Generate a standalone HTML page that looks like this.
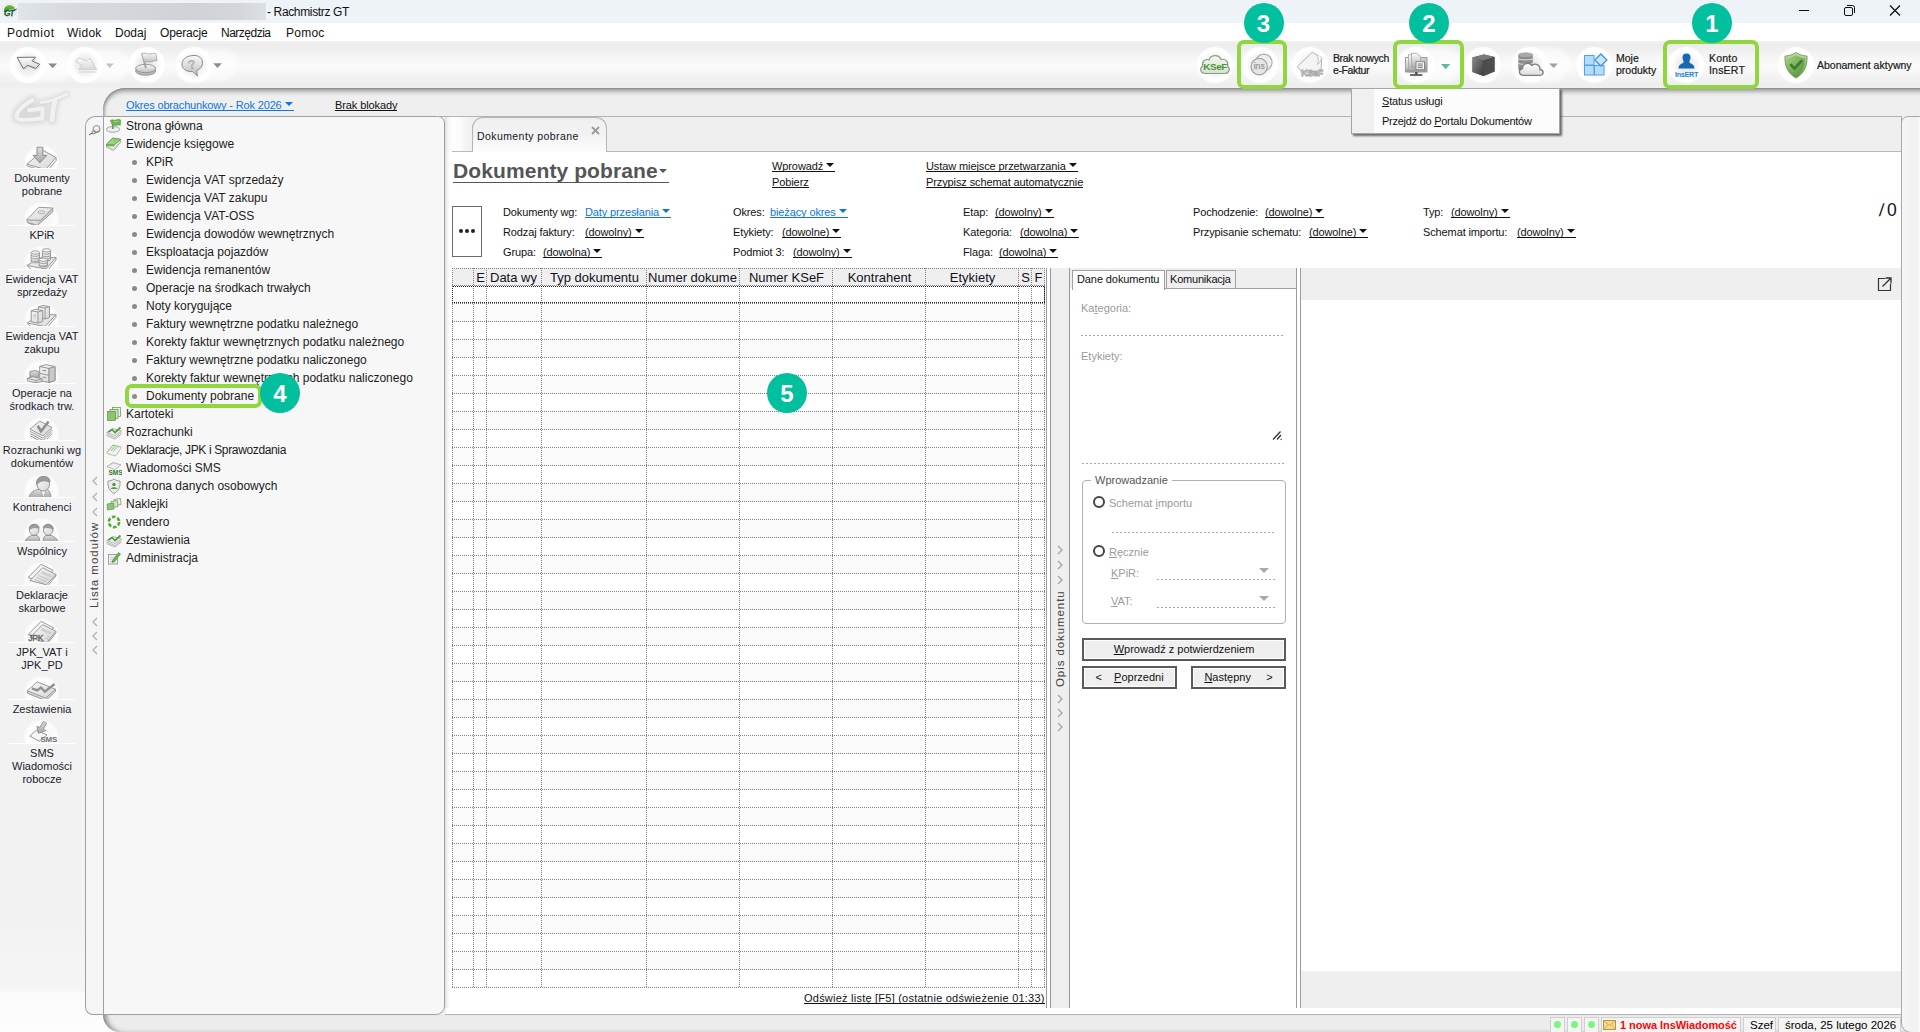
<!DOCTYPE html>
<html lang="pl">
<head>
<meta charset="utf-8">
<title>Rachmistrz GT</title>
<style>
*{box-sizing:border-box;margin:0;padding:0}
html,body{width:1920px;height:1032px;overflow:hidden;background:#f2f2f2}
body{font-family:"Liberation Sans",sans-serif;font-size:11px;color:#000;position:relative}
.abs{position:absolute}
.t{position:absolute;white-space:nowrap;line-height:1}
u{text-decoration:underline}
/* title */
#title{left:0;top:0;width:1920px;height:23px;background:#eef3f8}
#menu{left:0;top:23px;width:1920px;height:18px;background:#fff}
#menu span{position:absolute;top:3px;font-size:12px;line-height:14px;letter-spacing:.25px;color:#111}
#toolbar{left:0;top:41px;width:1920px;height:47px;background:linear-gradient(#f2f2f2 0%,#ececec 7%,#efefef 19%,#f6f6f6 36%,#fafafa 51%,#f7f7f7 64%,#f1f1f1 81%,#eeeeee 95%,#f0f0f0 100%)}
.glow{position:absolute;border-radius:50%;background:radial-gradient(closest-side,#e7e7e7 0%,#ebebeb 28%,#f3f3f3 50%,#fbfbfb 66%,#ffffff 76%,#ffffff 89%,rgba(255,255,255,0) 100%)}
.pill{position:absolute;border-radius:20px;background:rgba(255,255,255,.55);filter:blur(2px)}
.tbt{position:absolute;font-size:10.5px;line-height:12px;color:#1c1c1c;white-space:nowrap;-webkit-text-stroke:.22px #1c1c1c}
/* left bar */
#leftbar{left:0;top:88px;width:125px;height:944px;background:linear-gradient(#f2f2f2 0%,#f2f2f2 88%,#f5f5f5 95.600%,#fbfbfb 95.900%,#fdfdfd 100%)}
.mod{position:absolute;left:0;width:84px;text-align:center;font-size:11px;line-height:13px;color:#1a1a2a}
.mod .ic{position:relative;width:66px;height:24px;margin:0 auto 3px;border-bottom:1px solid #fff;overflow:hidden}
.mod .ic:before{content:"";position:absolute;left:15px;top:0;width:35px;height:35px;border-radius:50%;background:radial-gradient(closest-side,#f3f3f3 0%,#f9f9f9 55%,#fdfdfd 85%,#f6f6f6 100%)}
.mod .ic svg{position:absolute;left:0;top:0;width:66px;height:24px}
/* frame */
#frame{left:103px;top:88px;width:1830px;height:944px;border-radius:22px 0 0 20px;background:#efefef;box-shadow:inset 0 5px 5px -2px #8e8e8e, inset 0 1px 0 0 #a2a2a2, inset 3px 0 3px -1px #b0b0b0}
#lista{left:85px;top:116px;width:19px;height:899px;border:1px solid #a0a0a0;border-right:none;border-radius:10px 0 0 8px;background:#f5f5f5}
#tree{left:103px;top:116px;width:342px;height:899px;border:1px solid #a0a0a0;border-radius:0 7px 9px 0;background:#f7f7f7}
.tr{position:absolute;left:126px;font-size:12px;line-height:18px;height:18px;white-space:nowrap;color:#1c1c1c}
.tr.s{left:146px}
.tr.s:before{content:"";position:absolute;left:-14px;top:7px;width:5px;height:5px;border-radius:50%;background:#8a8a8a}
.tri{position:absolute;left:106px;width:16px;height:16px}
.vtxt{position:absolute;white-space:nowrap;font-size:12px;letter-spacing:.55px;color:#333;transform-origin:0 0;transform:rotate(-90deg);line-height:14px}
.chev{position:absolute;width:6px;height:10px}
/* content */
#content{left:445px;top:116px;width:1457px;height:892px;border:1px solid #b4b4b4;border-left:1px solid #f4f4f4;border-right:1px solid #aaa;border-bottom:none;border-radius:0;background:#efefef;overflow:hidden}
#white{left:445px;top:152px;width:1456px;height:856px;background:linear-gradient(90deg,#dcdcdc 0,#f1f1f1 2px,#fff 5px)}
.f{position:absolute;white-space:nowrap;font-size:11px;line-height:13px;color:#111}
.f u,.btn u{text-decoration:underline;text-underline-offset:.6px;text-decoration-thickness:1px}
.blue{color:#0b76e0}
.arr{position:absolute;right:1px;top:3px;width:0;height:0;border-left:4px solid transparent;border-right:4px solid transparent;border-top:4px solid currentColor}
.ua{position:relative;display:inline-block;height:13px;line-height:13px}
.ua.a{padding-right:12px}
.ua:after{content:"";position:absolute;left:0;right:0;top:11px;height:1px;background:currentColor}
.g{color:#9a9a9a}
.dsh{height:1px;background:repeating-linear-gradient(90deg,#a8a8a8 0,#a8a8a8 2px,transparent 2px,transparent 4px)}
.btn{position:absolute;border:2px solid #5a5a5a;background:#efefef;box-shadow:inset 0 0 0 1px #fff;font-size:11px;line-height:18px;text-align:center;color:#111}
.sc{position:absolute;top:1017px;height:16px;border:1px solid #cfcfcf;background:#f4f4f4;font-size:11.5px;line-height:14px;white-space:nowrap}
.badge{position:absolute;width:40px;height:40px;border-radius:50%;background:#02bf9d;color:#fff;font-weight:bold;font-size:24px;line-height:41px;text-align:center}
.gbox{position:absolute;border:4px solid #8fd63f;border-radius:7px}
</style>
</head>
<body>
<!-- TITLE BAR -->
<div id="title" class="abs">
<svg class="abs" style="left:0;top:0" width="20" height="22" viewBox="0 0 20 22"><defs><linearGradient id="gtg" x1="0" y1="0" x2="0" y2="1"><stop offset="0" stop-color="#6fcb42"/><stop offset="1" stop-color="#2f7f1d"/></linearGradient></defs><circle cx="9.400" cy="10.400" r="6.900" fill="#fdfdfd" stroke="#dcdcdc" stroke-width=".8"/><path d="M3.900 12 C3.600 7.600 6.400 5 9.600 5 C12 5 14 6.300 15 8.600 L9 9.800 L5.500 12.500 Z" fill="url(#gtg)"/><text x="3.900" y="15.900" font-family="Liberation Sans" font-weight="bold" font-style="italic" font-size="8.200" letter-spacing="-.7" fill="#1c5a38" stroke="#1c5a38" stroke-width=".3">GT</text><path d="M12 10.500 L16.800 9" stroke="#1c5a38" stroke-width=".9"/></svg>
<div class="abs" style="left:18px;top:3px;width:248px;height:17px;background:linear-gradient(90deg,#e1e4e9 0%,#dcdfe3 8%,#d6d8dc 25%,#d4d6da 45%,#d0d2d6 70%,#d4d6da 90%,#dde0e5 100%)"></div>
<div class="t" style="left:267px;top:6px;font-size:12px;color:#111;letter-spacing:-.36px">- Rachmistrz GT</div>
<svg class="abs" style="left:1790px;top:0" width="130" height="23" viewBox="0 0 130 23"><g stroke="#111" stroke-width="1" fill="none"><path d="M9 10.5 H19"/><rect x="54.5" y="7.5" width="8" height="8" rx="1.5"/><path d="M57 5.5 H62.5 A2 2 0 0 1 64.5 7.5 V13"/><path d="M100 5.5 L110 15.5 M110 5.5 L100 15.5" stroke-width="1.25"/></g></svg>
</div>
<!-- MENU -->
<div id="menu" class="abs">
<span style="left:7px;letter-spacing:.5px">Podmiot</span><span style="left:67px">Widok</span><span style="left:115px;letter-spacing:0">Dodaj</span><span style="left:160px;letter-spacing:-.15px">Operacje</span><span style="left:221px;letter-spacing:-.5px">Narzędzia</span><span style="left:286px">Pomoc</span>
</div>
<!-- TOOLBAR -->
<div id="toolbar" class="abs">
<!-- left buttons -->
<div class="pill" style="left:11px;top:8px;width:62px;height:32px"></div>
<div class="pill" style="left:68px;top:8px;width:62px;height:32px"></div>
<div class="pill" style="left:176px;top:8px;width:62px;height:32px"></div>
<div class="pill" style="left:1398px;top:7px;width:64px;height:34px"></div>
<div class="pill" style="left:1512px;top:7px;width:58px;height:34px"></div>
<div class="glow" style="left:9px;top:5px;width:38px;height:38px"></div>
<div class="glow" style="left:66px;top:5px;width:38px;height:38px"></div>
<div class="glow" style="left:128px;top:5px;width:38px;height:38px"></div>
<div class="glow" style="left:175px;top:5px;width:38px;height:38px"></div>
<svg class="abs" style="left:0;top:0" width="240" height="47" viewBox="0 0 240 47">
<defs><linearGradient id="gsil" x1="0" y1="0" x2="0" y2="1"><stop offset="0" stop-color="#fafafa"/><stop offset="1" stop-color="#bdbdbd"/></linearGradient>
<linearGradient id="gsil3" x1="0" y1="0" x2="0" y2="1"><stop offset="0" stop-color="#fbfbfb"/><stop offset="1" stop-color="#dadada"/></linearGradient>
<linearGradient id="gsil2" x1="0" y1="0" x2="0" y2="1"><stop offset="0" stop-color="#fbfbfb"/><stop offset="1" stop-color="#d9d9d9"/></linearGradient></defs>
<!-- back arrow -->
<path d="M17.200 16.400 L35.600 16.200 L31.900 19.900 L39.700 23.300 L35.600 27.400 L27.800 24.300 L23.400 27.700 Z" fill="#cfcfcf" opacity=".7" transform="translate(.5,1.800)"/>
<path d="M17.200 16.400 L35.600 16.200 L31.900 19.900 L39.700 23.300 L35.600 27.400 L27.800 24.300 L23.400 27.700 Z" fill="url(#gsil3)" stroke="#707070" stroke-width="1" stroke-linejoin="round"/>
<path d="M48.200 22.400 L57 22.400 L52.600 27.200 Z" fill="#8c8c8c"/>
<!-- forward arrow (disabled) -->
<path d="M75.300 20.200 L79 17 L86.200 19.900 L90.300 17.400 L96.600 28.300 L78.700 28.300 L82.500 24.600 Z" fill="url(#gsil2)" stroke="#cfcfcf" stroke-width="1" stroke-linejoin="round"/>
<path d="M78.700 31 H96.600" stroke="#dcdcdc" stroke-width="1.400"/>
<path d="M105.700 22.400 L113.700 22.400 L109.700 27 Z" fill="#c2c2c2"/>
<!-- flag -->
<ellipse cx="145.600" cy="30" rx="10" ry="4.200" fill="#b9b9b9" stroke="#8e8e8e" stroke-width=".9"/>
<ellipse cx="145.600" cy="27.500" rx="10" ry="4.200" fill="url(#gsil)" stroke="#8e8e8e" stroke-width=".9"/>
<path d="M141.300 12.800 L143.200 12.300 L146.800 26.800 L145 27.500 Z" fill="#a2a2a2"/>
<path d="M141.700 12.500 C145 11 147.500 14 151 12.800 C153 12 155 12.300 156 13 L157 20 C155 19 153 20.500 150 21 C147.500 21.300 145.500 20 143.800 21 Z" fill="url(#gsil)" stroke="#a4a4a4" stroke-width=".8"/>
<!-- help bubble -->
<path d="M193 14.5 C199 14 203 17.5 202.5 22.5 C202 26.5 199.5 28.5 196.5 29.5 L197.5 35 L192.5 30.5 C186 31 181.500 27.5 182 22.500 C182.5 17.5 187 15 193 14.5 Z" fill="url(#gsil)" stroke="#8c8c8c" stroke-width="1"/>
<text x="187.5" y="28" font-family="Liberation Sans" font-weight="bold" font-size="13" fill="#b9b9b9" stroke="#a8a8a8" stroke-width=".3" transform="rotate(-12 192 23)">?</text>
<path d="M213.200 22.300 L221.900 22.300 L217.550 27.100 Z" fill="#8c8c8c"/>
</svg>
<!-- right buttons -->
<div class="glow" style="left:1196px;top:5px;width:38px;height:38px"></div>
<div class="glow" style="left:1241px;top:5px;width:38px;height:38px"></div>
<div class="glow" style="left:1291px;top:5px;width:38px;height:38px"></div>
<div class="glow" style="left:1397px;top:5px;width:38px;height:38px"></div>
<div class="glow" style="left:1464px;top:5px;width:38px;height:38px"></div>
<div class="glow" style="left:1511px;top:5px;width:38px;height:38px"></div>
<div class="glow" style="left:1575px;top:5px;width:38px;height:38px"></div>
<div class="glow" style="left:1667px;top:5px;width:38px;height:38px"></div>
<div class="glow" style="left:1777px;top:5px;width:38px;height:38px"></div>
<svg class="abs" style="left:1190px;top:0" width="730" height="47" viewBox="1190 0 730 47">
<defs>
<linearGradient id="gk" x1="0" y1="0" x2="0" y2="1"><stop offset="0" stop-color="#f4f8f0"/><stop offset="1" stop-color="#d5e2cb"/></linearGradient>
<linearGradient id="gcube" x1="0" y1="0" x2="1" y2="1"><stop offset="0" stop-color="#8a8a8a"/><stop offset="1" stop-color="#3a3a3a"/></linearGradient>
<linearGradient id="gsh" x1="0" y1="0" x2="1" y2="1"><stop offset="0" stop-color="#a6d27e"/><stop offset="1" stop-color="#4f8f37"/></linearGradient>
<linearGradient id="gmon" x1="0" y1="0" x2="0" y2="1"><stop offset="0" stop-color="#fdfdfd"/><stop offset="1" stop-color="#a9a9a9"/></linearGradient>
<linearGradient id="gsh2" x1="0" y1="0" x2="0" y2="1"><stop offset="0" stop-color="#c4dfae"/><stop offset="1" stop-color="#5d9440"/></linearGradient>
<linearGradient id="gcl" x1="0" y1="0" x2="0" y2="1"><stop offset="0" stop-color="#ffffff"/><stop offset="1" stop-color="#dcdcdc"/></linearGradient>
<linearGradient id="gmon2" x1="0" y1="0" x2=".6" y2="1"><stop offset="0" stop-color="#f6f6f6"/><stop offset="1" stop-color="#9c9c9c"/></linearGradient>
</defs>
<!-- KSeF cloud -->
<path d="M1205 32.500 C1200.500 32.500 1199.300 27.500 1202.500 25 C1201.500 20.500 1205.500 17.500 1209 19 C1210.500 13.500 1219 13 1221 18.500 C1225.500 17.500 1229 21 1227.500 25 C1230.500 27 1229.500 32.500 1225 32.500 Z" fill="url(#gk)" stroke="#8f968a" stroke-width="1.100"/>
<text x="1215.200" y="28.600" text-anchor="middle" font-family="Liberation Sans" font-weight="bold" font-size="9.800" fill="#45953c" letter-spacing="-.35">KSeF</text>
<!-- ins coins -->
<circle cx="1263.900" cy="21.300" r="8.200" fill="#ededed" stroke="#ababab" stroke-width="1.100"/>
<circle cx="1259.200" cy="25.600" r="8.200" fill="#e6e6e6" stroke="#9f9f9f" stroke-width="1.200"/>
<text x="1259.200" y="28.400" text-anchor="middle" font-family="Liberation Sans" font-size="8.600" fill="#9a9a9a" stroke="#9a9a9a" stroke-width=".25">ins</text>
<!-- KSeF doc house -->
<path d="M1297.500 25.600 L1312.300 11.200 L1321.700 16.600 L1321 31 L1302 31 Z" fill="#f4f4f4" stroke="#b5b5b5" stroke-width="1" stroke-linejoin="round"/>
<path d="M1316.500 13.800 C1318.500 17 1318.800 20.500 1317.300 23.500 C1319.500 22 1321 19.500 1321.700 16.600" fill="#fdfdfd" stroke="#b9b9b9" stroke-width=".9"/>
<text x="1311.800" y="35.300" text-anchor="middle" font-family="Liberation Sans" font-weight="bold" font-size="9.300" fill="#f8f8f8" stroke="#a4a4a4" stroke-width=".8" letter-spacing="-.55">KSeF</text>
<!-- monitor + docs -->
<rect x="1405.500" y="16.500" width="21.500" height="14.500" fill="url(#gmon2)" stroke="#9a9a9a" stroke-width=".9"/>
<path d="M1408.500 13.700 H1414 L1418.500 17 V31 H1408.500 Z" fill="url(#gmon)" stroke="#a2a2a2" stroke-width=".8"/>
<path d="M1411.500 12.300 H1416.500 L1420.500 15.800 V27 H1411.500 Z" fill="url(#gmon)" stroke="#a2a2a2" stroke-width=".8"/>
<path d="M1405.500 28.500 H1427 V31 H1405.500 Z" fill="#9d9d9d"/>
<rect x="1416" y="20.700" width="8.500" height="8" fill="#f7f7f7" stroke="#7d7d7d" stroke-width=".9"/>
<path d="M1417.700 23 H1422.800 M1417.700 24.800 H1422.800 M1417.700 26.600 H1422.800" stroke="#6a6a6a" stroke-width=".9"/>
<path d="M1416.300 31 V33.500" stroke="#4e4e4e" stroke-width="2.400"/>
<path d="M1410 34 H1422.300" stroke="#404040" stroke-width="1.500"/>
<path d="M1441 23 L1450.300 23 L1445.650 28.300 Z" fill="#62b79f"/>
<!-- cube -->
<path d="M1472.500 16.500 L1484 13.500 L1494.500 16 L1494.500 30.500 L1483.500 35 L1472.500 31 Z" fill="#3d3d3d"/>
<path d="M1472.500 16.500 L1484 13.500 L1494.500 16 L1483.500 19.500 Z" fill="#7a7a7a"/>
<path d="M1472.500 16.500 L1483.500 19.500 L1483.500 35 L1472.500 31 Z" fill="url(#gcube)"/>
<path d="M1483.500 19.500 L1494.500 16 L1494.500 30.500 L1483.500 35 Z" fill="#4d4d4d"/>
<!-- db + cloud -->
<path d="M1518.300 14 C1518.300 11 1532.800 11 1532.800 14 V28 C1532.800 31 1518.300 31 1518.300 28 Z" fill="#8b8b8b"/>
<path d="M1518.300 17.300 C1518.300 19.500 1532.800 19.500 1532.800 17.300 M1518.300 21.800 C1518.300 24 1532.800 24 1532.800 21.800" fill="none" stroke="#d9d9d9" stroke-width="1.200"/>
<ellipse cx="1525.550" cy="13.800" rx="7.250" ry="2.300" fill="#a9a9a9"/>
<path d="M1524 34.300 C1518.500 34.300 1518 28.500 1522.500 27.500 C1522.500 22.500 1529 20.500 1532 24.500 C1535.500 21.500 1541 24.500 1539.800 28.500 C1544 28.500 1544.500 34.300 1540 34.300 Z" fill="url(#gcl)" stroke="#7e7e7e" stroke-width="1.300"/>
<path d="M1549.200 22.500 L1558 22.500 L1553.600 27 Z" fill="#a2a2a2"/>
<!-- moje produkty -->
<rect x="1584.500" y="14.500" width="9.500" height="9.500" fill="#b7dcf9" stroke="#4fa3e8" stroke-width="1"/>
<rect x="1584.500" y="24.500" width="9.500" height="9.500" fill="#b7dcf9" stroke="#4fa3e8" stroke-width="1"/>
<rect x="1594.500" y="24.500" width="9.500" height="9.500" fill="#b7dcf9" stroke="#4fa3e8" stroke-width="1"/>
<rect x="1596.650" y="14.750" width="8.500" height="8.500" fill="#c9e5fb" stroke="#3f97e2" stroke-width="1.300" transform="rotate(45 1600.900 19)"/>
<!-- konto insert -->
<circle cx="1686.500" cy="16.500" r="4" fill="#1769b5"/>
<path d="M1678.500 27.500 C1678.500 23 1682.500 22.500 1684 21.500 L1689 21.500 C1690.500 22.500 1694.500 23 1694.500 27.500 Z" fill="#1769b5"/>
<path d="M1683.500 19 H1689.500 V23 H1683.500 Z" fill="#1769b5"/>
<text x="1686.500" y="35.500" text-anchor="middle" font-family="Liberation Sans" font-weight="bold" font-size="7.200" fill="#1b86d8" letter-spacing="-.3">InsERT</text>
<!-- shield -->
<path d="M1796 11.500 C1799.500 14 1803.500 15 1807 15 C1807.500 25 1804 32.500 1796 37 C1788 32.500 1784.500 25 1785 15 C1788.500 15 1792.500 14 1796 11.500 Z" fill="url(#gsh2)" stroke="#6f9d58" stroke-width=".9"/>
<path d="M1796 14 C1799 16 1802 17 1804.800 17.200 C1805 25 1802.300 30.800 1796 34.500 C1789.700 30.800 1787 25 1787.200 17.200 C1790 17 1793 16 1796 14 Z" fill="url(#gsh)"/>
<path d="M1790.300 23.300 L1794.500 27.500 L1802 19.300" fill="none" stroke="#3f7d2a" stroke-width="2.700"/>
</svg>
<div class="tbt" style="left:1333px;top:11px;letter-spacing:-.38px">Brak nowych<br>e-Faktur</div>
<div class="tbt" style="left:1616px;top:11px">Moje<br>produkty</div>
<div class="tbt" style="left:1709px;top:11px;letter-spacing:.2px">Konto<br>InsERT</div>
<div class="tbt" style="left:1817px;top:17.500px">Abonament aktywny</div>

</div>
<!-- LEFT BAR -->
<div id="leftbar" class="abs">
<svg class="abs" style="left:0;top:0" width="86" height="44" viewBox="0 0 86 44"><defs><filter id="bl3" x="-20%" y="-40%" width="140%" height="180%"><feGaussianBlur stdDeviation="2.200"/></filter><filter id="bl1"><feGaussianBlur stdDeviation=".5"/></filter></defs><g filter="url(#bl3)" fill="none" stroke="#d9d9d9" stroke-linecap="round" stroke-linejoin="round"><path d="M32.500 12 C24 17 17 23 16.500 28 C16.500 33.500 26 32 42 30.500 L42.700 20.500 L29 22.500" stroke-width="9"/><path d="M41 14.500 C50 13.500 60 10 67 6" stroke-width="6"/><path d="M55 12.500 C53 20 52.500 27 52 32" stroke-width="9"/><path d="M22 27 L40 24" stroke-width="8"/></g><g filter="url(#bl1)" fill="none" stroke="#f1f1f1" stroke-linecap="round" stroke-linejoin="round"><path d="M32.500 12 C24 17 17 23 16.500 28 C16.500 33.500 26 32 42 30.500 L42.700 20.500 C38 20.500 33 22.500 29 22" stroke-width="3.800"/><path d="M41 14.500 C50 13.500 60 10 67 6" stroke-width="2.600"/><path d="M55 12.500 C53 20 52.500 27 52 32" stroke-width="4.600"/></g></svg>
<div class="mod" style="top:57px"><div class="ic"><svg viewBox="0 0 66 24"><defs><linearGradient id="lg1" x1="0" y1="0" x2="1" y2="1"><stop offset="0" stop-color="#f7f7f7"/><stop offset="1" stop-color="#d6d6d6"/></linearGradient><linearGradient id="lg2" x1="0" y1="0" x2="0" y2="1"><stop offset="0" stop-color="#dedede"/><stop offset="1" stop-color="#a6a6a6"/></linearGradient></defs><path d="M34 5.300 L47 12.500 L36.500 24.500 L18 19.200 Z" fill="url(#lg1)" stroke="#8e8e8e" stroke-width=".9" stroke-linejoin="round"/><path d="M47 12.500 L47.300 15.200 L39.500 24.500 M18 19.200 L18.300 21 L28 24" fill="none" stroke="#8e8e8e" stroke-width=".9" stroke-linejoin="round"/><path d="M28 2.200 H33.800 V10.400 H37.900 L30.900 17.800 L24.100 10.400 H28 Z" fill="url(#lg2)" stroke="#858585" stroke-width=".9" stroke-linejoin="round"/></svg></div>Dokumenty<br>pobrane</div>
<div class="mod" style="top:114px"><div class="ic"><svg viewBox="0 0 66 24"><path d="M18 18.500 L18.200 20.500 L28.300 23.500 L43.800 9.800 L43.800 6" fill="#dedede" stroke="#8e8e8e" stroke-width=".9" stroke-linejoin="round"/><path d="M28.300 21 L43.800 7.500 M28.300 22.300 L43.800 8.700" stroke="#a9a9a9" stroke-width=".5"/><path d="M29.800 5.300 L43.800 6 L31.600 18.300 L17.600 18 Z" fill="url(#lg1)" stroke="#8e8e8e" stroke-width=".9" stroke-linejoin="round"/><rect x="29" y="9" width="6.600" height="2.600" rx="1.200" fill="#e6e6e6" stroke="#999" stroke-width=".7"/><path d="M19 20.700 L25 23.800 M22 21 L29 24" stroke="#999" stroke-width=".8"/></svg></div>KPiR</div>
<div class="mod" style="top:158px"><div class="ic"><svg viewBox="0 0 66 24"><path d="M30 12 L47 11.500 L37 23 L18 19.500 Z" fill="url(#lg1)" stroke="#8e8e8e" stroke-width=".9" stroke-linejoin="round"/><path d="M47 11.500 L47 14 L39 24 M18 19.500 L23 24" fill="none" stroke="#8e8e8e" stroke-width=".9" stroke-linejoin="round"/><g fill="url(#lg1)" stroke="#858585" stroke-width=".75"><path d="M22.2 6.5 V15.5 C22.2 17.3 30.5 17.3 30.5 15.5 V6.5"/><ellipse cx="26.35" cy="6.5" rx="4.15" ry="1.700" fill="#f1f1f1"/><path d="M22.2 9.0 C22.2 10.8 30.5 10.8 30.5 9.0" fill="none"/><path d="M22.2 11.5 C22.2 13.3 30.5 13.3 30.5 11.5" fill="none"/><path d="M22.2 14.0 C22.2 15.8 30.5 15.8 30.5 14.0" fill="none"/></g><g fill="url(#lg1)" stroke="#858585" stroke-width=".75"><path d="M33.4 4.3 V13.5 C33.4 15.3 41.599999999999994 15.3 41.599999999999994 13.5 V4.3"/><ellipse cx="37.5" cy="4.3" rx="4.1" ry="1.700" fill="#f1f1f1"/><path d="M33.4 6.8 C33.4 8.6 41.599999999999994 8.6 41.599999999999994 6.8" fill="none"/><path d="M33.4 9.3 C33.4 11.100000000000001 41.599999999999994 11.100000000000001 41.599999999999994 9.3" fill="none"/><path d="M33.4 11.8 C33.4 13.600000000000001 41.599999999999994 13.600000000000001 41.599999999999994 11.8" fill="none"/></g><g fill="url(#lg1)" stroke="#858585" stroke-width=".75"><path d="M30.1 13.7 V19.5 C30.1 21.3 38.400000000000006 21.3 38.400000000000006 19.5 V13.7"/><ellipse cx="34.25" cy="13.7" rx="4.15" ry="1.700" fill="#f1f1f1"/><path d="M30.1 16.2 C30.1 18.0 38.400000000000006 18.0 38.400000000000006 16.2" fill="none"/><path d="M30.1 18.7 C30.1 20.5 38.400000000000006 20.5 38.400000000000006 18.7" fill="none"/></g></svg></div>Ewidencja VAT<br>sprzedaży</div>
<div class="mod" style="top:215px"><div class="ic"><svg viewBox="0 0 66 24"><path d="M30 11.500 L47 11.800 L36 23.500 L18.300 20 Z" fill="url(#lg1)" stroke="#8e8e8e" stroke-width=".9" stroke-linejoin="round"/><path d="M47 11.800 L47 14.300 L38.500 24 M18.300 20 L22 24" fill="none" stroke="#8e8e8e" stroke-width=".9" stroke-linejoin="round"/><g stroke="#8e8e8e" stroke-width=".9" stroke-linejoin="round"><path d="M29.400 4 L34 2.400 L40.500 3.600 L40.500 14.500 L36 16 L29.400 14.800 Z" fill="url(#lg1)"/><path d="M36 5 V16 M29.400 4 L36 5 L40.500 3.600" fill="none"/><path d="M22.200 7.800 L27 6.200 L33.700 7.500 L33.700 18.600 L29 20 L22.200 18.800 Z" fill="url(#lg1)"/><path d="M29 9 V20 M22.200 7.800 L29 9 L33.700 7.500" fill="none"/><rect x="24" y="11" width="3" height="3.500" fill="#d4d4d4" stroke="none"/></g></svg></div>Ewidencja VAT<br>zakupu</div>
<div class="mod" style="top:272px"><div class="ic"><svg viewBox="0 0 66 24"><g stroke="#8e8e8e" stroke-width=".9" stroke-linejoin="round"><path d="M30.700 6.500 L37 4.600 L46 6.500 L46 20.500 L40 22.500 L30.700 20.500 Z" fill="url(#lg1)"/><path d="M40 8.500 V22.500 M30.700 6.500 L40 8.500 L46 6.500 M30.700 13.300 L40 15.300" fill="none"/><path d="M33.500 10.300 L37 11 M33.500 17 L37 17.700" stroke="#8a8a8a" stroke-width="1.100"/><path d="M40 8.500 L46 6.500 L46 20.500 L40 22.500 Z" fill="#c9c9c9"/><path d="M20.900 11.600 L26 10.600 L29.800 11.600 L29.800 16.800 L25 18 L20.900 16.800 Z" fill="url(#lg2)"/><path d="M18.300 18.300 L24 16.800 L33.200 18.800 L33.200 21.300 L27 23 L18.300 20.800 Z" fill="url(#lg1)"/><path d="M18.300 18.300 L27 20.500 L33.200 18.800 M27 20.500 V23" fill="none"/></g></svg></div>Operacje na<br>środkach trw.</div>
<div class="mod" style="top:329px"><div class="ic"><svg viewBox="0 0 66 24"><path d="M20.900 16.500 L34.100 23.500 L43 14.500 M20.900 14.300 L34.100 21.300 L43 12.500 M21 18.700 L31 24 M38 22 L43 16.700" fill="none" stroke="#8e8e8e" stroke-width=".9" stroke-linejoin="round"/><path d="M20.900 12.200 L30.700 4.100 L43 10.500 L34.100 19 Z" fill="url(#lg1)" stroke="#8e8e8e" stroke-width=".9" stroke-linejoin="round"/><path d="M28.600 8.800 L32 14.300 L39.600 4.500" fill="none" stroke="#8f8f8f" stroke-width="2.600" stroke-linejoin="miter"/></svg></div>Rozrachunki wg<br>dokumentów</div>
<div class="mod" style="top:386px"><div class="ic"><svg viewBox="0 0 66 24"><g stroke="#8e8e8e" stroke-width=".9" stroke-linejoin="round"><path d="M20 24 C20.500 19 24 17 28.500 15.500 L38.500 15.500 C40.500 17 42 20 42 24 Z" fill="url(#lg2)"/><path d="M31.500 16 L34.500 24 L37 16.500" fill="#f4f4f4" stroke-width=".6"/><ellipse cx="34.300" cy="10.200" rx="6.300" ry="6.800" fill="url(#lg1)"/><path d="M27.800 10.500 C26.500 4 32 1.800 36 2.500 C39.500 3 41.500 5.500 40.800 8 C38 7 35 6 31.500 7.500 C30 8.200 28.500 9.500 27.800 10.500 Z" fill="#9c9c9c" stroke="#8a8a8a"/></g></svg></div>Kontrahenci</div>
<div class="mod" style="top:430px"><div class="ic"><svg viewBox="0 0 66 24"><g stroke="#8e8e8e" stroke-width=".9" stroke-linejoin="round"><path d="M16.200 23.500 C17 20 20 18.500 22.500 17.500 L28 17.500 C30 18.500 30.700 20.500 30.700 23.500 Z" fill="url(#lg2)"/><ellipse cx="25.100" cy="11.800" rx="4.800" ry="5.400" fill="url(#lg1)"/><path d="M20.300 11.500 C19.800 7.500 23 6 26 6.300 C28.500 6.600 30.300 8.200 30 10.300 C27.500 9.300 24 9 20.300 11.500 Z" fill="#9c9c9c"/><path d="M34.100 23.500 C34.100 20.500 34.800 18.500 36.800 17.500 L42.300 17.500 C44.800 18.500 48 20 49 23.500 Z" fill="url(#lg2)"/><ellipse cx="39.200" cy="11.800" rx="4.800" ry="5.400" fill="url(#lg1)"/><path d="M34.400 10.300 C34.100 8.200 35.900 6.600 38.400 6.300 C41.400 6 44.600 7.500 44.100 11.500 C40.400 9 36.900 9.300 34.400 10.300 Z" fill="#9c9c9c"/></g></svg></div>Wspólnicy</div>
<div class="mod" style="top:474px"><div class="ic"><svg viewBox="0 0 66 24"><path d="M32 2.300 L44.300 8.300 L32 20 L19.200 15.500 Z" fill="#f4f4f4" stroke="#8e8e8e" stroke-width=".9" stroke-linejoin="round"/><path d="M33.700 5.700 L46.900 12.500 L37.500 22.800 L20.900 18.500 Z" fill="url(#lg1)" stroke="#8e8e8e" stroke-width=".9" stroke-linejoin="round"/><path d="M33.500 9 L43.500 13.500 L41.500 15.800 L31.500 11.300 Z" fill="#cfcfcf"/><path d="M29.500 13.300 L39.500 17.800 M27.500 15.300 L37.500 19.800 M25.500 17.300 L35 21.300" stroke="#b2b2b2" stroke-width=".8"/><path d="M46.900 12.500 L46.900 14 L39.500 22.800" fill="none" stroke="#8e8e8e" stroke-width=".9" stroke-linejoin="round"/></svg></div>Deklaracje<br>skarbowe</div>
<div class="mod" style="top:531px"><div class="ic"><svg viewBox="0 0 66 24"><path d="M32 2.400 L44.800 8.800 L32 20 L19.200 15.500 Z" fill="#f4f4f4" stroke="#8e8e8e" stroke-width=".9" stroke-linejoin="round"/><path d="M33.700 5.700 L46.900 12.200 L37.500 24 L20.900 18.500 Z" fill="url(#lg1)" stroke="#8e8e8e" stroke-width=".9" stroke-linejoin="round"/><path d="M33.500 9 L43.500 13.500 L41.500 15.800 L31.500 11.300 Z" fill="#cfcfcf"/><path d="M38 17 L41 18.400 M36.500 19 L39.500 20.400" stroke="#b2b2b2" stroke-width=".8"/><path d="M46.900 12.200 L46.900 13.800 L39.500 23.500" fill="none" stroke="#8e8e8e" stroke-width=".9" stroke-linejoin="round"/><text x="19.300" y="21.700" font-family="Liberation Sans" font-size="8.600" fill="#5e5e5e" stroke="#5e5e5e" stroke-width=".35" letter-spacing="-.3">JPK</text></svg></div>JPK_VAT i<br>JPK_PD</div>
<div class="mod" style="top:588px"><div class="ic"><svg viewBox="0 0 66 24"><path d="M18.300 14.900 L18.500 17.300 L36.700 24.500 L46.500 15.500 L46.500 13.200" fill="#d9d9d9" stroke="#8e8e8e" stroke-width=".9" stroke-linejoin="round"/><path d="M18.300 14.900 L28.100 5.900 L46.500 13.200 L36.700 22.100 Z" fill="url(#lg1)" stroke="#8e8e8e" stroke-width=".9" stroke-linejoin="round"/><path d="M23 12.300 L28.100 14.400 L32 11.500 L35.800 15.700 L45.600 8" fill="none" stroke="#909090" stroke-width="2.400" stroke-linejoin="miter"/></svg></div>Zestawienia</div>
<div class="mod" style="top:632px"><div class="ic"><svg viewBox="0 0 66 24"><path d="M20.800 16.100 L27.300 10.300 L38 15 L30.100 21.100 Z" fill="#f6f6f6" stroke="#8e8e8e" stroke-width=".9" stroke-linejoin="round"/><path d="M34.400 1.500 L37.600 3.300 L34.300 9 L36.800 10.600 L29.300 13.300 L28 6.300 L30.700 7.500 Z" fill="url(#lg2)" stroke="#858585" stroke-width=".8" stroke-linejoin="round"/><text x="31.500" y="21.600" font-family="Liberation Sans" font-weight="bold" font-size="8" fill="#767676" letter-spacing="-.25">SMS</text></svg></div>SMS<br>Wiadomości<br>robocze</div>
</div>
<!-- FRAME -->
<div id="frame" class="abs"></div>
<div id="lista" class="abs"></div>
<div id="tree" class="abs"></div>
<svg class="tri" style="top:118px" viewBox="0 0 16 16"><ellipse cx="7" cy="11.400" rx="6.700" ry="2.800" fill="#f0f0f0" stroke="#9a9a9a" stroke-width=".9"/><path d="M6.900 2.500 V11" stroke="#4f9a3a" stroke-width="1.500"/><path d="M4.300 2.600 C6 .800 8.500 3 11 1.700 C12.500 1 14 1.500 14.800 2.300 L14.300 7.300 C12.500 6.300 10.500 8 8.500 7.200 C7.500 6.800 6.800 7 6.500 7.500 Z" fill="#6db552" stroke="#57a53c" stroke-width=".6"/><path d="M8 3.300 C9.500 4 11 3.300 12.500 3.500" stroke="#a8d890" stroke-width="1" fill="none"/></svg><div class="tr" style="top:117px">Strona główna</div>
<svg class="tri" style="top:136px" viewBox="0 0 16 16"><path d="M.200 8.700 L.200 11 L7.500 14.600 L14.800 6.200 L14.800 3.300" fill="#ececec" stroke="#9a9a9a" stroke-width=".8" stroke-linejoin="round"/><path d="M.600 10 L7.600 13.300 L14.600 5" fill="none" stroke="#b5b5b5" stroke-width=".6"/><path d="M6.500 2.100 L14.800 3.300 L8.200 8.900 L.100 8.700 Z" fill="#9fd184" stroke="#57a53c" stroke-width="1" stroke-linejoin="round"/><path d="M.100 8.700 L.100 9.800 L8.200 10.100 L8.200 8.900" fill="#6db552" stroke="#57a53c" stroke-width=".5"/><path d="M8.200 4.300 L10.800 4.700 L9.800 5.600 L7.200 5.200 Z" fill="#7abf5f"/></svg><div class="tr" style="top:135px">Ewidencje księgowe</div>
<div class="tr s" style="top:153px">KPiR</div>
<div class="tr s" style="top:171px">Ewidencja VAT sprzedaży</div>
<div class="tr s" style="top:189px">Ewidencja VAT zakupu</div>
<div class="tr s" style="top:207px">Ewidencja VAT-OSS</div>
<div class="tr s" style="top:225px">Ewidencja dowodów wewnętrznych</div>
<div class="tr s" style="top:243px">Eksploatacja pojazdów</div>
<div class="tr s" style="top:261px">Ewidencja remanentów</div>
<div class="tr s" style="top:279px">Operacje na środkach trwałych</div>
<div class="tr s" style="top:297px">Noty korygujące</div>
<div class="tr s" style="top:315px">Faktury wewnętrzne podatku należnego</div>
<div class="tr s" style="top:333px">Korekty faktur wewnętrznych podatku należnego</div>
<div class="tr s" style="top:351px">Faktury wewnętrzne podatku naliczonego</div>
<div class="tr s" style="top:369px">Korekty faktur wewnętrznych podatku naliczonego</div>
<div class="tr s" style="top:387px">Dokumenty pobrane</div>
<svg class="tri" style="top:406px" viewBox="0 0 16 16"><g stroke="#5d8f4c" stroke-width=".7"><rect x="6.500" y="1.500" width="8" height="9" fill="#e9efe5"/><rect x="4" y="3.500" width="8" height="9" fill="#cfe3c4"/><rect x="1.500" y="5.500" width="8" height="9" fill="#8cc56d"/></g></svg><div class="tr" style="top:405px">Kartoteki</div>
<svg class="tri" style="top:424px" viewBox="0 0 16 16"><path d="M0.500 8.500 L7 4.500 L15.500 7 L9 11.500 Z" fill="#f0f0f0" stroke="#9a9a9a" stroke-width=".7" stroke-linejoin="round"/><path d="M0.500 10 L9 13.500 L15.500 8.500 M0.500 11.500 L9 15 L15.500 10" fill="none" stroke="#9a9a9a" stroke-width=".7"/><path d="M2.500 8 L6 5.500 L9 8.500 L14.500 3.500" fill="none" stroke="#4f9a3a" stroke-width="1.700"/></svg><div class="tr" style="top:423px">Rozrachunki</div>
<svg class="tri" style="top:442px" viewBox="0 0 16 16"><path d="M1 10 L7 3 L15 5 L9.500 12.500 Z" fill="#dfeeda" stroke="#7aa56a" stroke-width=".8" stroke-linejoin="round"/><path d="M1 10 V11.500 L9.500 14 L15 6.500 V5" fill="#f4f4f4" stroke="#8fae84" stroke-width=".7" stroke-linejoin="round"/><path d="M5 9 L9 4.500 M7 9.800 L11 5.300" stroke="#7ab562" stroke-width=".8"/></svg><div class="tr" style="top:441px;letter-spacing:-.36px">Deklaracje, JPK i Sprawozdania</div>
<svg class="tri" style="top:460px" viewBox="0 0 16 16"><path d="M1 6.500 L7 2.500 L15 5 L9 9.500 Z" fill="#f3f3f3" stroke="#9a9a9a" stroke-width=".7" stroke-linejoin="round"/><path d="M4 5.500 L8 3 L12 4.500" fill="none" stroke="#bdbdbd" stroke-width=".6"/><text x="2.500" y="14.500" font-family="Liberation Sans" font-weight="bold" font-size="6.500" fill="#2f7a22">SMS</text></svg><div class="tr" style="top:459px">Wiadomości SMS</div>
<svg class="tri" style="top:478px" viewBox="0 0 16 16"><path d="M8 1 C10 2.500 12 3 14 3 C14.500 9 12.500 13 8 15.500 C3.500 13 1.500 9 2 3 C4 3 6 2.500 8 1 Z" fill="#ececec" stroke="#8f8f8f" stroke-width=".9"/><circle cx="8" cy="6.500" r="1.700" fill="#4f9a3a"/><path d="M4.800 11 C4.800 8.500 11.200 8.500 11.200 11 Z" fill="#4f9a3a"/></svg><div class="tr" style="top:477px">Ochrona danych osobowych</div>
<svg class="tri" style="top:496px" viewBox="0 0 16 16"><g stroke="#6c8f5f" stroke-width=".7"><path d="M8 3.500 L14.500 2.500 L15 8.500 L8.500 9.500 Z" fill="#efefef"/><path d="M5 5.500 L11.500 4.500 L12 10.500 L5.500 11.500 Z" fill="#cfe3c4"/><path d="M1 8 L7.500 7 L8 13 L1.500 14 Z" fill="#8cc56d"/></g></svg><div class="tr" style="top:495px">Naklejki</div>
<svg class="tri" style="top:514px" viewBox="0 0 16 16"><circle cx="8" cy="8" r="5.200" fill="none" stroke="#58a840" stroke-width="2.600" stroke-dasharray="3.600 1.850"/></svg><div class="tr" style="top:513px">vendero</div>
<svg class="tri" style="top:532px" viewBox="0 0 16 16"><path d="M0.500 8.500 L7 4.500 L15.500 7 L9 11.500 Z" fill="#f0f0f0" stroke="#9a9a9a" stroke-width=".7" stroke-linejoin="round"/><path d="M0.500 10 L9 13.500 L15.500 8.500 M0.500 11.500 L9 15 L15.500 10" fill="none" stroke="#9a9a9a" stroke-width=".7"/><path d="M2.500 8 L6 5.500 L9 8.500 L14.500 3.500" fill="none" stroke="#4f9a3a" stroke-width="1.700"/></svg><div class="tr" style="top:531px">Zestawienia</div>
<svg class="tri" style="top:550px" viewBox="0 0 16 16"><rect x="2.500" y="4.500" width="9" height="9.500" fill="#efefef" stroke="#8f8f8f" stroke-width=".8"/><path d="M4 7.500 H9 M4 9.500 H8 M4 11.500 H9" stroke="#c5c5c5" stroke-width=".7"/><path d="M6.500 10.500 L12.500 2.500 L14.500 4 L8.500 11.800 L6 12.500 Z" fill="#6cb552" stroke="#3f8a2d" stroke-width=".6"/></svg><div class="tr" style="top:549px">Administracja</div>
<svg class="abs" style="left:86px;top:121px" width="18" height="17" viewBox="86 121 18 17"><path d="M89 134.800 L93.500 132.500" stroke="#555" stroke-width="1"/><ellipse cx="94.300" cy="131.800" rx="2.600" ry="1.800" fill="#d9d9d9" stroke="#7d7d7d" stroke-width=".8" transform="rotate(-30 94.300 131.800)"/><circle cx="96.600" cy="129" r="3.500" fill="#e4e4e4" stroke="#888" stroke-width=".9"/><path d="M94 130.500 C95 132.800 98.500 132.500 99.800 130.300" fill="none" stroke="#6a6a6a" stroke-width="1"/><circle cx="96.200" cy="127.900" r="1.600" fill="#fff"/></svg>
<div class="vtxt" style="left:87px;top:608px;font-size:11.500px;letter-spacing:.98px;color:#444">Lista modułów</div>
<svg class="chev" style="left:92px;top:476px" viewBox="0 0 6 10"><path d="M5 1 L1 5 L5 9" fill="none" stroke="#b2b2b2" stroke-width="1.300"/></svg><svg class="chev" style="left:92px;top:492px" viewBox="0 0 6 10"><path d="M5 1 L1 5 L5 9" fill="none" stroke="#b2b2b2" stroke-width="1.300"/></svg><svg class="chev" style="left:92px;top:507px" viewBox="0 0 6 10"><path d="M5 1 L1 5 L5 9" fill="none" stroke="#b2b2b2" stroke-width="1.300"/></svg><svg class="chev" style="left:92px;top:617px" viewBox="0 0 6 10"><path d="M5 1 L1 5 L5 9" fill="none" stroke="#b2b2b2" stroke-width="1.300"/></svg><svg class="chev" style="left:92px;top:631px" viewBox="0 0 6 10"><path d="M5 1 L1 5 L5 9" fill="none" stroke="#b2b2b2" stroke-width="1.300"/></svg><svg class="chev" style="left:92px;top:645px" viewBox="0 0 6 10"><path d="M5 1 L1 5 L5 9" fill="none" stroke="#b2b2b2" stroke-width="1.300"/></svg>
<div id="content" class="abs"></div>
<div class="abs" style="left:436px;top:116px;width:12px;height:1px;background:#b0b0b0"></div>
<div class="abs" style="left:445px;top:117px;width:28px;height:35px;background:linear-gradient(90deg,#dcdcdc 0,#efefef 2px,#fafafa 5px,#fefefe 9px,#fbfbfb 15px,#f3f3f3 22px,#efefef 28px)"></div>
<div id="white" class="abs"></div>
<div class="abs" style="left:452px;top:151px;width:1449px;height:1px;background:#b9b9b9"></div>
<!-- tab -->
<div class="abs" style="left:472px;top:117px;width:135px;height:35px;border:1px solid #b4b4b4;border-bottom:none;border-radius:11px 11px 0 0;background:linear-gradient(#f0f0f0 0%,#f2f2f2 50%,#fdfdfd 100%)"></div>
<div class="t" style="left:477px;top:131px;font-size:10.500px;letter-spacing:.42px;color:#151525">Dokumenty pobrane</div>
<svg class="abs" style="left:591px;top:126px" width="9" height="9" viewBox="0 0 9 9"><path d="M1 1 L8 8 M8 1 L1 8" stroke="#9a9a9a" stroke-width="1.800"/></svg>
<!-- period bar -->
<div class="f blue" style="left:126px;top:99px;letter-spacing:-.16px"><span class="ua a">Okres obrachunkowy - Rok 2026<i class="arr"></i></span></div>
<div class="f" style="left:335px;top:99px;letter-spacing:-.1px"><span class="ua">Brak blokady</span></div>
<!-- heading -->
<div class="t" style="left:453px;top:160px;font-size:21px;font-weight:bold;color:#555;letter-spacing:.1px">Dokumenty pobrane</div>
<div class="abs" style="left:453px;top:182px;width:216px;height:1px;background:#555"></div>
<div class="abs" style="left:659px;top:169px;width:0;height:0;border-left:4px solid transparent;border-right:4px solid transparent;border-top:4px solid #555"></div>
<!-- actions -->
<div class="f" style="left:772px;top:160px;letter-spacing:-.1px"><span class="ua a">Wprowadź<i class="arr"></i></span></div>
<div class="f" style="left:772px;top:176px;letter-spacing:-.1px"><span class="ua">Pobierz</span></div>
<div class="f" style="left:926px;top:160px;letter-spacing:-.1px"><span class="ua a">Ustaw miejsce przetwarzania<i class="arr"></i></span></div>
<div class="f" style="left:926px;top:176px;letter-spacing:-.1px"><span class="ua">Przypisz schemat automatycznie</span></div>
<!-- dots box -->
<div class="abs" style="left:452px;top:206px;width:30px;height:51px;border:1px solid #6a6a6a;background:#fff"></div>
<div class="abs" style="left:459px;top:229px;width:4px;height:4px;border-radius:50%;background:#222;box-shadow:6px 0 0 #222,12px 0 0 #222"></div>
<div class="f" style="left:503px;top:206px;letter-spacing:-.12px">Dokumenty wg:</div><div class="f blue" style="left:585px;top:206px;letter-spacing:-.12px"><span class="ua a">Daty przesłania<i class="arr"></i></span></div>
<div class="f" style="left:503px;top:226px;letter-spacing:-.12px">Rodzaj faktury:</div><div class="f" style="left:585px;top:226px;letter-spacing:-.12px"><span class="ua a">(dowolny)<i class="arr"></i></span></div>
<div class="f" style="left:503px;top:246px;letter-spacing:-.12px">Grupa:</div><div class="f" style="left:543px;top:246px;letter-spacing:-.12px"><span class="ua a">(dowolna)<i class="arr"></i></span></div>
<div class="f" style="left:733px;top:206px;letter-spacing:-.12px">Okres:</div><div class="f blue" style="left:770px;top:206px;letter-spacing:-.12px"><span class="ua a">bieżący okres<i class="arr"></i></span></div>
<div class="f" style="left:733px;top:226px;letter-spacing:-.12px">Etykiety:</div><div class="f" style="left:782px;top:226px;letter-spacing:-.12px"><span class="ua a">(dowolne)<i class="arr"></i></span></div>
<div class="f" style="left:733px;top:246px;letter-spacing:-.12px">Podmiot 3:</div><div class="f" style="left:793px;top:246px;letter-spacing:-.12px"><span class="ua a">(dowolny)<i class="arr"></i></span></div>
<div class="f" style="left:963px;top:206px;letter-spacing:-.12px">Etap:</div><div class="f" style="left:995px;top:206px;letter-spacing:-.12px"><span class="ua a">(dowolny)<i class="arr"></i></span></div>
<div class="f" style="left:963px;top:226px;letter-spacing:-.12px">Kategoria:</div><div class="f" style="left:1020px;top:226px;letter-spacing:-.12px"><span class="ua a">(dowolna)<i class="arr"></i></span></div>
<div class="f" style="left:963px;top:246px;letter-spacing:-.12px">Flaga:</div><div class="f" style="left:999px;top:246px;letter-spacing:-.12px"><span class="ua a">(dowolna)<i class="arr"></i></span></div>
<div class="f" style="left:1193px;top:206px;letter-spacing:-.12px">Pochodzenie:</div><div class="f" style="left:1265px;top:206px;letter-spacing:-.12px"><span class="ua a">(dowolne)<i class="arr"></i></span></div>
<div class="f" style="left:1193px;top:226px;letter-spacing:-.12px">Przypisanie schematu:</div><div class="f" style="left:1309px;top:226px;letter-spacing:-.12px"><span class="ua a">(dowolne)<i class="arr"></i></span></div>
<div class="f" style="left:1423px;top:206px;letter-spacing:-.12px">Typ:</div><div class="f" style="left:1451px;top:206px;letter-spacing:-.12px"><span class="ua a">(dowolny)<i class="arr"></i></span></div>
<div class="f" style="left:1423px;top:226px;letter-spacing:-.12px">Schemat importu:</div><div class="f" style="left:1517px;top:226px;letter-spacing:-.12px"><span class="ua a">(dowolny)<i class="arr"></i></span></div>
<div class="t" style="left:1879px;top:202px;font-size:17.500px;color:#111;letter-spacing:3px"><i style="font-style:normal;display:inline-block;transform:skewX(-4deg)">/</i>0</div>
<div class="abs" style="left:453px;top:268px;width:592px;height:18px;background:#efefef"></div>
<div class="abs" style="left:453px;top:304px;width:592px;height:18px;background:#fafafa"></div><div class="abs" style="left:453px;top:340px;width:592px;height:18px;background:#fafafa"></div><div class="abs" style="left:453px;top:376px;width:592px;height:18px;background:#fafafa"></div><div class="abs" style="left:453px;top:412px;width:592px;height:18px;background:#fafafa"></div><div class="abs" style="left:453px;top:448px;width:592px;height:18px;background:#fafafa"></div><div class="abs" style="left:453px;top:484px;width:592px;height:18px;background:#fafafa"></div><div class="abs" style="left:453px;top:520px;width:592px;height:18px;background:#fafafa"></div><div class="abs" style="left:453px;top:556px;width:592px;height:18px;background:#fafafa"></div><div class="abs" style="left:453px;top:592px;width:592px;height:18px;background:#fafafa"></div><div class="abs" style="left:453px;top:628px;width:592px;height:18px;background:#fafafa"></div><div class="abs" style="left:453px;top:664px;width:592px;height:18px;background:#fafafa"></div><div class="abs" style="left:453px;top:700px;width:592px;height:18px;background:#fafafa"></div><div class="abs" style="left:453px;top:736px;width:592px;height:18px;background:#fafafa"></div><div class="abs" style="left:453px;top:772px;width:592px;height:18px;background:#fafafa"></div><div class="abs" style="left:453px;top:808px;width:592px;height:18px;background:#fafafa"></div><div class="abs" style="left:453px;top:844px;width:592px;height:18px;background:#fafafa"></div><div class="abs" style="left:453px;top:880px;width:592px;height:18px;background:#fafafa"></div><div class="abs" style="left:453px;top:916px;width:592px;height:18px;background:#fafafa"></div><div class="abs" style="left:453px;top:952px;width:592px;height:18px;background:#fafafa"></div>
<svg class="abs" style="left:452px;top:267px" width="596" height="724" viewBox="452 267 596 724" shape-rendering="crispEdges"><g stroke="#7d7d7d" stroke-width="1" stroke-dasharray="1 1"><path d="M452.5 268 V988"/><path d="M473.5 268 V988"/><path d="M486.5 268 V988"/><path d="M541.5 268 V988"/><path d="M646.5 268 V988"/><path d="M739.5 268 V988"/><path d="M832.5 268 V988"/><path d="M925.5 268 V988"/><path d="M1018.5 268 V988"/><path d="M1031.5 268 V988"/><path d="M1044.5 268 V988"/><path d="M452 268.5 H1045"/><path d="M452 285.5 H1045"/><path d="M452 303.5 H1045"/><path d="M452 321.5 H1045"/><path d="M452 339.5 H1045"/><path d="M452 357.5 H1045"/><path d="M452 375.5 H1045"/><path d="M452 393.5 H1045"/><path d="M452 411.5 H1045"/><path d="M452 429.5 H1045"/><path d="M452 447.5 H1045"/><path d="M452 465.5 H1045"/><path d="M452 483.5 H1045"/><path d="M452 501.5 H1045"/><path d="M452 519.5 H1045"/><path d="M452 537.5 H1045"/><path d="M452 555.5 H1045"/><path d="M452 573.5 H1045"/><path d="M452 591.5 H1045"/><path d="M452 609.5 H1045"/><path d="M452 627.5 H1045"/><path d="M452 645.5 H1045"/><path d="M452 663.5 H1045"/><path d="M452 681.5 H1045"/><path d="M452 699.5 H1045"/><path d="M452 717.5 H1045"/><path d="M452 735.5 H1045"/><path d="M452 753.5 H1045"/><path d="M452 771.5 H1045"/><path d="M452 789.5 H1045"/><path d="M452 807.5 H1045"/><path d="M452 825.5 H1045"/><path d="M452 843.5 H1045"/><path d="M452 861.5 H1045"/><path d="M452 879.5 H1045"/><path d="M452 897.5 H1045"/><path d="M452 915.5 H1045"/><path d="M452 933.5 H1045"/><path d="M452 951.5 H1045"/><path d="M452 969.5 H1045"/><path d="M452 987.5 H1045"/></g><rect x="452.500" y="286.500" width="592" height="16" fill="none" stroke="#222" stroke-width="1" stroke-dasharray="1 1"/></svg>
<div class="t" style="left:474px;top:270px;width:13px;text-align:center;font-size:13px;line-height:15px;color:#101020">E</div>
<div class="t" style="left:490px;top:270px;width:52px;overflow:hidden;font-size:13px;line-height:15px;color:#101020">Data wy</div>
<div class="t" style="left:542px;top:270px;width:105px;text-align:center;font-size:13px;line-height:15px;color:#101020">Typ dokumentu</div>
<div class="t" style="left:648px;top:270px;width:90px;overflow:hidden;font-size:13px;line-height:15px;color:#101020">Numer dokume</div>
<div class="t" style="left:740px;top:270px;width:93px;text-align:center;font-size:13px;line-height:15px;color:#101020">Numer KSeF</div>
<div class="t" style="left:833px;top:270px;width:93px;text-align:center;font-size:13px;line-height:15px;color:#101020">Kontrahent</div>
<div class="t" style="left:926px;top:270px;width:93px;text-align:center;font-size:13px;line-height:15px;color:#101020">Etykiety</div>
<div class="t" style="left:1019px;top:270px;width:13px;text-align:center;font-size:13px;line-height:15px;color:#101020">S</div>
<div class="t" style="left:1032px;top:270px;width:13px;text-align:center;font-size:13px;line-height:15px;color:#101020">F</div>
<div class="f" style="left:804px;top:992px;letter-spacing:.23px"><span class="ua">Odśwież listę [F5] (ostatnie odświeżenie 01:33)</span></div>
<div class="abs" style="left:1046px;top:268px;width:1px;height:740px;background:#9a9a9a"></div>
<div class="abs" style="left:1050px;top:268px;width:1px;height:740px;background:#9a9a9a"></div>
<div class="abs" style="left:1051px;top:268px;width:18px;height:740px;background:#efefef"></div>
<div class="abs" style="left:1069px;top:268px;width:1px;height:740px;background:#9a9a9a"></div>
<div class="abs" style="left:1296px;top:268px;width:1px;height:740px;background:#9a9a9a"></div>
<div class="abs" style="left:1300px;top:268px;width:1px;height:740px;background:#9a9a9a"></div>
<div class="abs" style="left:1301px;top:268px;width:600px;height:32px;background:#efefef"></div>
<div class="abs" style="left:1301px;top:971px;width:600px;height:37px;background:#efefef"></div>
<svg class="abs" style="left:1877px;top:277px" width="15" height="15" viewBox="0 0 15 15"><path d="M8 1.500 H1.500 V13.500 H13.500 V7" fill="none" stroke="#333" stroke-width="1.200"/><path d="M5.500 9.500 L13.500 1.500 M8.500 1 H14 V6.500" fill="none" stroke="#333" stroke-width="1.300"/></svg>
<div class="vtxt" style="left:1053px;top:687px;letter-spacing:.92px;font-size:11.500px;color:#444">Opis dokumentu</div>
<svg class="chev" style="left:1057px;top:545px" viewBox="0 0 6 10"><path d="M1 1 L5 5 L1 9" fill="none" stroke="#a4a4a4" stroke-width="1.300"/></svg><svg class="chev" style="left:1057px;top:560px" viewBox="0 0 6 10"><path d="M1 1 L5 5 L1 9" fill="none" stroke="#a4a4a4" stroke-width="1.300"/></svg><svg class="chev" style="left:1057px;top:575px" viewBox="0 0 6 10"><path d="M1 1 L5 5 L1 9" fill="none" stroke="#a4a4a4" stroke-width="1.300"/></svg><svg class="chev" style="left:1057px;top:694px" viewBox="0 0 6 10"><path d="M1 1 L5 5 L1 9" fill="none" stroke="#a4a4a4" stroke-width="1.300"/></svg><svg class="chev" style="left:1057px;top:708px" viewBox="0 0 6 10"><path d="M1 1 L5 5 L1 9" fill="none" stroke="#a4a4a4" stroke-width="1.300"/></svg><svg class="chev" style="left:1057px;top:722px" viewBox="0 0 6 10"><path d="M1 1 L5 5 L1 9" fill="none" stroke="#a4a4a4" stroke-width="1.300"/></svg>
<div class="abs" style="left:1070px;top:268px;width:226px;height:20px;background:#efefef"></div>
<div class="abs" style="left:1072px;top:270px;width:93px;height:20px;border:1px solid #a0a0a0;border-bottom:none;background:#fff"></div>
<div class="abs" style="left:1166px;top:270px;width:70px;height:18px;border:1px solid #a0a0a0;border-bottom:none;background:#efefef"></div>
<div class="abs" style="left:1164px;top:288px;width:132px;height:1px;background:#a0a0a0"></div>
<div class="f" style="left:1077px;top:273px;letter-spacing:-.1px">Dane dokumentu</div>
<div class="f" style="left:1170px;top:273px;letter-spacing:-.2px">Komunikacja</div>
<div class="f g" style="left:1081px;top:302px">Ka<u>t</u>egoria:</div>
<div class="abs dsh" style="left:1081px;top:335px;width:202px"></div>
<div class="f g" style="left:1081px;top:350px">Etykiety:</div>
<svg class="abs" style="left:1271px;top:429px" width="12" height="12" viewBox="0 0 12 12"><path d="M2 10.500 L9.500 2.500 M6 10.500 L10 6 M9.800 10.800 L10.500 10" stroke="#333" stroke-width="1.300" fill="none"/></svg>
<div class="abs dsh" style="left:1082px;top:463px;width:202px"></div>
<div class="abs" style="left:1082px;top:480px;width:204px;height:144px;border:1px solid #b0b0b0;border-radius:4px"></div>
<div class="f" style="left:1091px;top:474px;background:#fff;padding:0 4px;color:#555">Wprowadzanie</div>
<div class="abs" style="left:1093px;top:496px;width:12px;height:12px;border-radius:50%;border:2px solid #444;background:#fff"></div>
<div class="f g" style="left:1109px;top:497px">Schemat <u>i</u>mportu</div>
<div class="abs dsh" style="left:1112px;top:532px;width:162px"></div>
<div class="abs" style="left:1093px;top:545px;width:12px;height:12px;border-radius:50%;border:2px solid #444;background:#fff"></div>
<div class="f g" style="left:1109px;top:546px"><u>R</u>ęcznie</div>
<div class="f g" style="left:1111px;top:567px"><u>K</u>PiR:</div>
<div class="abs dsh" style="left:1157px;top:579px;width:118px"></div>
<div class="abs" style="left:1259px;top:568px;width:0;height:0;border-left:5px solid transparent;border-right:5px solid transparent;border-top:5px solid #a9a9a9"></div>
<div class="f g" style="left:1111px;top:595px"><u>V</u>AT:</div>
<div class="abs dsh" style="left:1157px;top:607px;width:118px"></div>
<div class="abs" style="left:1259px;top:596px;width:0;height:0;border-left:5px solid transparent;border-right:5px solid transparent;border-top:5px solid #a9a9a9"></div>
<div class="btn" style="left:1082px;top:638px;width:204px;height:23px"><u>W</u>prowadź z potwierdzeniem</div>
<div class="btn" style="left:1082px;top:666px;width:95px;height:23px">&lt;&nbsp;&nbsp;&nbsp;&nbsp;<u>P</u>oprzedni</div>
<div class="btn" style="left:1191px;top:666px;width:95px;height:23px"><u>N</u>astępny&nbsp;&nbsp;&nbsp;&nbsp;&nbsp;&gt;</div>
<div class="abs" style="z-index:3;left:1901px;top:116px;width:30px;height:917px;border:1px solid #a8a8a8;border-radius:7px 0 0 10px;background:linear-gradient(90deg,#f6f6f6 0,#f1f1f1 12px,#f3f3f3 16px,#fbfbfb 18px)"></div>
<div class="vtxt" style="left:1904px;top:621px;letter-spacing:.78px;font-size:11.500px;color:#444">Obszar roboczy</div>
<svg class="chev" style="left:1907px;top:485px" viewBox="0 0 6 10"><path d="M5 1 L1 5 L5 9" fill="none" stroke="#b2b2b2" stroke-width="1.300"/></svg><svg class="chev" style="left:1907px;top:500px" viewBox="0 0 6 10"><path d="M5 1 L1 5 L5 9" fill="none" stroke="#b2b2b2" stroke-width="1.300"/></svg><svg class="chev" style="left:1907px;top:514px" viewBox="0 0 6 10"><path d="M5 1 L1 5 L5 9" fill="none" stroke="#b2b2b2" stroke-width="1.300"/></svg><svg class="chev" style="left:1907px;top:627px" viewBox="0 0 6 10"><path d="M5 1 L1 5 L5 9" fill="none" stroke="#b2b2b2" stroke-width="1.300"/></svg><svg class="chev" style="left:1907px;top:641px" viewBox="0 0 6 10"><path d="M5 1 L1 5 L5 9" fill="none" stroke="#b2b2b2" stroke-width="1.300"/></svg><svg class="chev" style="left:1907px;top:655px" viewBox="0 0 6 10"><path d="M5 1 L1 5 L5 9" fill="none" stroke="#b2b2b2" stroke-width="1.300"/></svg>
<!-- STATUS -->
<div class="abs" style="left:446px;top:1008px;width:1455px;height:6px;background:#fff"></div>
<div class="abs" style="left:445px;top:1014px;width:1457px;height:1px;background:#b4b4b4"></div>
<div class="abs" style="left:103px;top:1015px;width:1808px;height:17px;background:#ececec;border-radius:0 0 0 17px/0 0 0 17px;box-shadow:inset 6px -1px 5px -3px #858585"></div>
<div class="sc" style="left:1550px;width:15px"></div><div class="sc" style="left:1567px;width:15px"></div><div class="sc" style="left:1584px;width:15px"></div>
<div class="abs" style="left:1554px;top:1021px;width:7px;height:7px;border-radius:50%;background:#7df57d"></div>
<div class="abs" style="left:1571px;top:1021px;width:7px;height:7px;border-radius:50%;background:#7df57d"></div>
<div class="abs" style="left:1588px;top:1021px;width:7px;height:7px;border-radius:50%;background:#7df57d"></div>
<div class="sc" style="left:1601px;width:140px;color:#fb0707;font-weight:bold;font-size:11px;padding-left:18px;letter-spacing:-.05px">1 nowa InsWiadomość</div>
<svg class="abs" style="left:1603px;top:1020px" width="13" height="10" viewBox="0 0 13 10"><rect x=".500" y=".500" width="12" height="9" fill="#f3d98a" stroke="#b8963a" stroke-width="1"/><path d="M.500 .500 L6.500 5.500 L12.500 .500 M.500 9.500 L5 4.500 M12.500 9.500 L8 4.500" fill="none" stroke="#c9a44a" stroke-width=".8"/></svg>
<div class="sc" style="left:1743px;width:33px;padding-left:6px">Szef</div>
<div class="sc" style="left:1778px;width:123px;padding-left:6px">środa, 25 lutego 2026</div>
<!-- popup menu -->
<div class="abs" style="left:1351px;top:88px;width:209px;height:46px;border:1px solid #a5a5a5;background:#fcfcfc;box-shadow:2px 2px 2px 0 rgba(60,60,60,.75)"><div class="abs" style="left:0;top:0;width:22px;height:44px;background:#f0f0f0"></div></div>
<div class="f" style="left:1382px;top:95px;letter-spacing:-.2px"><u>S</u>tatus usługi</div>
<div class="f" style="left:1382px;top:115px;letter-spacing:-.26px">Przejdź do <u>P</u>ortalu Dokumentów</div>
<!-- green boxes -->
<div class="gbox" style="left:1237px;top:40px;width:50px;height:49px"></div>
<div class="gbox" style="left:1393px;top:40px;width:71px;height:49px"></div>
<div class="gbox" style="left:1663px;top:40px;width:96px;height:49px"></div>
<div class="gbox" style="left:125px;top:383.700px;width:137px;height:24px;border-width:4px;border-radius:7px"></div>
<!-- badges -->
<div class="badge" style="left:1243.500px;top:3.400px">3</div>
<div class="badge" style="left:1409px;top:3.400px">2</div>
<div class="badge" style="left:1692px;top:2.800px">1</div>
<div class="badge" style="left:260px;top:373.300px">4</div>
<div class="badge" style="left:767px;top:372.800px">5</div>

</body>
</html>
